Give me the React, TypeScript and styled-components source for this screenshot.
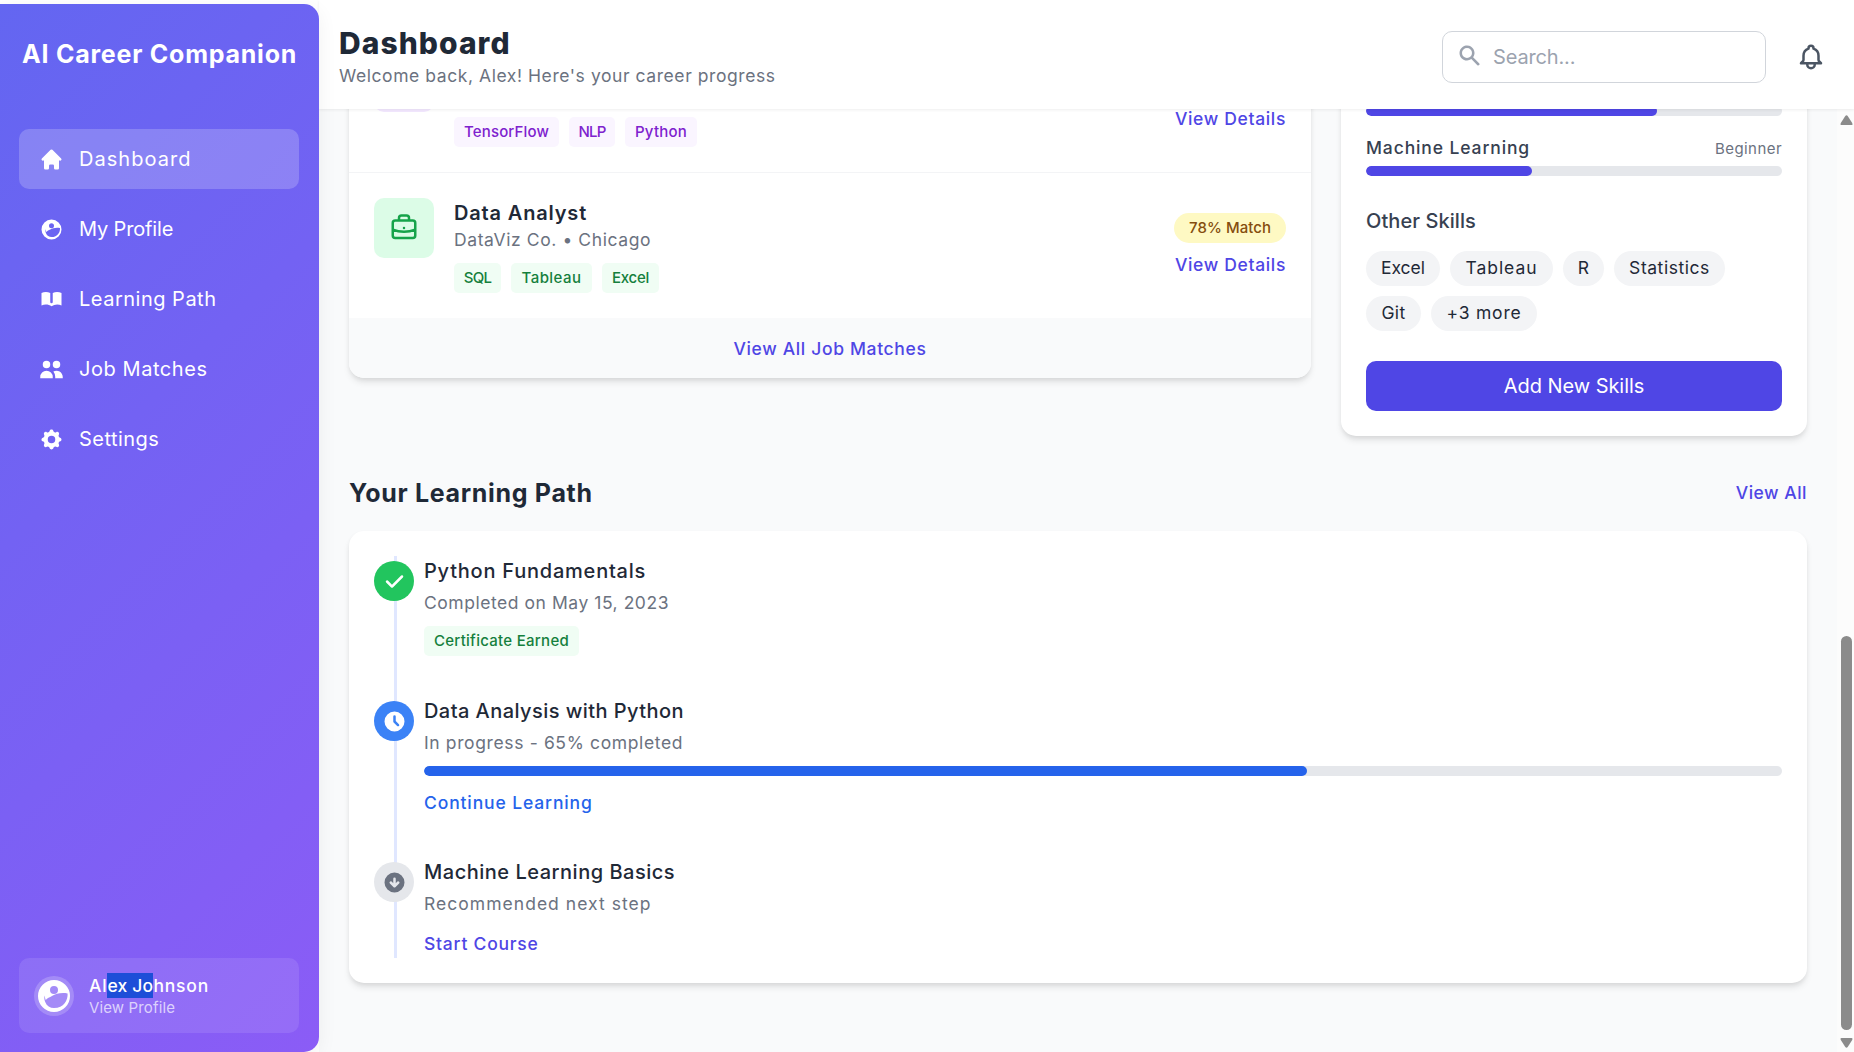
import React from 'react';
import styled, { createGlobalStyle, css } from 'styled-components';
import {
  HiHome,
  HiBookOpen,
  HiUsers,
  HiCog,
  HiSearch,
  HiCheck,
  HiClock,
  HiArrowCircleDown,
  HiOutlineBell,
  HiOutlineBriefcase,
} from 'react-icons/hi';

const GlobalStyle = createGlobalStyle`
  *, *::before, *::after { box-sizing: border-box; }
  body {
    margin: 0;
    overflow: hidden;
    background: #fff;
    color: #1f2937;
    font-family: Inter, "Liberation Sans", sans-serif;
  }
  h1, h2, h3, h4, p { margin: 0; }
  button, input { font: inherit; }
`;

type Spaced = { $ls?: number };
const spacing = css<Spaced>`
  letter-spacing: ${({ $ls = 0 }) => $ls}px;
  white-space: nowrap;
`;

const Shell = styled.div`
  display: flex;
  width: 1854px;
  height: 1052px;
`;

/* Sidebar */

const Sidebar = styled.aside`
  display: flex;
  flex-direction: column;
  flex: none;
  width: 319px;
  height: 1048px;
  margin-top: 4px;
  padding: 23px 20px 19px 19px;
  border-radius: 0 15px 15px 0;
  background: linear-gradient(135deg, #6366f1, #8b5cf6);
  box-shadow: 0 5px 20px rgba(0, 0, 0, 0.06);
  color: #fff;
  position: relative;
  z-index: 3;
`;

const Brand = styled.h1<Spaced>`
  padding-left: 3px;
  font-size: 25px;
  font-weight: 700;
  line-height: 54px;
  ${spacing}
`;

const Nav = styled.nav`
  display: flex;
  flex-direction: column;
  gap: 10px;
  margin-top: 48px;
`;

const NavItem = styled.a<Spaced & { $active?: boolean }>`
  display: flex;
  align-items: center;
  gap: 15px;
  height: 60px;
  padding-left: 20px;
  border-radius: 10px;
  background: ${({ $active }) => ($active ? 'rgba(255,255,255,.2)' : 'transparent')};
  font-size: 20px;
  ${spacing}
  svg { width: 25px; height: 25px; }
`;

const UserCard = styled.div`
  display: flex;
  align-items: center;
  gap: 15px;
  height: 75px;
  margin-top: auto;
  padding-left: 15px;
  border-radius: 10px;
  background: rgba(255, 255, 255, 0.1);
`;

const Avatar = styled.div`
  width: 40px;
  height: 40px;
  border-radius: 50%;
  background: rgba(255, 255, 255, 0.2);
  svg { display: block; width: 40px; height: 40px; }
`;

const UserName = styled.p<Spaced>`
  font-size: 17.5px;
  font-weight: 500;
  line-height: 25px;
  ${spacing}
`;

const Selected = styled.span`
  display: inline-block;
  height: 25px;
  vertical-align: top;
  background: #1d4ed8;
  letter-spacing: 0.2px;
`;

const UserLink = styled.p<Spaced>`
  color: rgba(255, 255, 255, 0.7);
  font-size: 15px;
  line-height: 20px;
  ${spacing}
`;

/* Header */

const Main = styled.div`
  display: flex;
  flex-direction: column;
  flex: 1;
  min-width: 0;
`;

const Header = styled.header`
  display: flex;
  align-items: center;
  justify-content: space-between;
  flex: none;
  height: 109px;
  padding: 5px 28px 0 20px;
  background: #fff;
  box-shadow: 0 1px 3px rgba(0, 0, 0, 0.07);
  position: relative;
  z-index: 2;
`;

const Heading = styled.div`
  margin-top: -1px;
`;

const PageTitle = styled.h2<Spaced>`
  font-size: 30px;
  font-weight: 800;
  line-height: 38px;
  ${spacing}
`;

const PageSubtitle = styled.p<Spaced>`
  color: #6b7280;
  font-size: 17.5px;
  line-height: 27px;
  ${spacing}
`;

const HeaderTools = styled.div`
  display: flex;
  align-items: center;
  gap: 30px;
  > svg { width: 30px; height: 30px; color: #4b5563; }
`;

const SearchBox = styled.label`
  display: flex;
  align-items: center;
  gap: 11px;
  width: 324px;
  height: 52px;
  padding: 0 14px;
  border: 1px solid #d1d5db;
  border-radius: 10px;
  color: #9ca3af;
  svg { width: 25px; height: 25px; margin-top: -3px; flex: none; }
`;

const SearchInput = styled.input`
  width: 240px;
  padding: 0;
  border: 0;
  outline: 0;
  background: none;
  font-size: 20px;
  letter-spacing: -0.15px;
  &::placeholder { color: #9ca3af; opacity: 1; }
`;

/* Scroll region */

const Scroller = styled.div`
  display: flex;
  flex: 1;
  min-height: 0;
  background: #f9fafb;
`;

const Content = styled.main`
  display: flex;
  flex-direction: column;
  justify-content: flex-end;
  flex: 1;
  min-width: 0;
  overflow: hidden;
  padding: 0 30px 69px;
  > * { flex-shrink: 0; }
`;

const ScrollBar = styled.div`
  display: flex;
  flex-direction: column;
  align-items: center;
  flex: none;
  width: 17px;
  padding: 6px 0 4px 1px;
  background: #fcfcfc;
  svg { width: 13px; height: 10px; fill: #8b8b8b; flex: none; }
`;

const Thumb = styled.div`
  width: 11px;
  height: 394px;
  margin: auto 0 8px;
  border-radius: 6px;
  background: #8b8b8b;
`;

const Columns = styled.div`
  display: grid;
  grid-template-columns: 962px 466px;
  gap: 30px;
  align-items: start;
  height: 409px;
`;

const Card = styled.section`
  border-radius: 15px;
  background: #fff;
  box-shadow: 0 5px 7px -1px rgba(0, 0, 0, 0.1), 0 2px 5px -1px rgba(0, 0, 0, 0.07);
`;

/* Job matches */

const JobsCard = styled(Card)`
  margin-top: -1px;
`;

const JobRow = styled.article`
  display: flex;
  gap: 20px;
  height: 146px;
  padding: 25px;
  border-top: 1px solid #f3f4f6;
`;

const JobIcon = styled.div<{ $bg: string; $fg: string }>`
  display: grid;
  place-items: center;
  width: 60px;
  height: 60px;
  border-radius: 10px;
  background: ${({ $bg }) => $bg};
  color: ${({ $fg }) => $fg};
  svg { width: 30px; height: 30px; }
`;

const JobBody = styled.div`
  display: flex;
  flex-direction: column;
  justify-content: flex-end;
  height: 95px;
`;

const JobTitle = styled.h3<Spaced>`
  font-size: 20px;
  font-weight: 600;
  line-height: 30px;
  ${spacing}
`;

const Muted = styled.p<Spaced>`
  padding-bottom: 2px;
  color: #6b7280;
  font-size: 17.5px;
  line-height: 23px;
  ${spacing}
`;

const Tags = styled.div`
  display: flex;
  gap: 10px;
  margin-top: 10px;
`;

const Tag = styled.span<Spaced & { $tone: 'green' | 'purple'; $w: number }>`
  width: ${({ $w }) => $w}px;
  height: 30px;
  border-radius: 5px;
  background: ${({ $tone }) => ($tone === 'green' ? '#f0fdf4' : '#faf5ff')};
  color: ${({ $tone }) => ($tone === 'green' ? '#15803d' : '#7e22ce')};
  font-size: 15px;
  font-weight: 500;
  line-height: 30px;
  text-align: center;
  ${spacing}
`;

const JobAside = styled.div`
  display: flex;
  flex-direction: column;
  justify-content: flex-end;
  align-items: flex-end;
  gap: 10px;
  height: 80px;
  margin-left: auto;
`;

const MatchPill = styled.span<Spaced>`
  width: 112px;
  height: 30px;
  border-radius: 15px;
  background: #fef9c3;
  color: #854d0e;
  font-size: 15px;
  font-weight: 500;
  line-height: 30px;
  text-align: center;
  ${spacing}
`;

const TextLink = styled.a<Spaced & { $blue?: boolean }>`
  display: block;
  padding-bottom: 2px;
  color: ${({ $blue }) => ($blue ? '#2563eb' : '#4f46e5')};
  font-size: 17.5px;
  font-weight: 500;
  line-height: 23px;
  ${spacing}
`;

const CardFooter = styled.footer`
  display: grid;
  place-items: center;
  height: 60px;
  padding-top: 3px;
  border-radius: 0 0 15px 15px;
  background: #f9fafb;
`;

/* Skills */

const SkillsCard = styled(Card)`
  height: 409px;
  padding: 79px 25px 25px;
`;

const Track = styled.div<{ $gap?: number }>`
  height: 10px;
  margin-top: ${({ $gap = 0 }) => $gap}px;
  border-radius: 5px;
  background: #e5e7eb;
  overflow: hidden;
`;

const Fill = styled.div<{ $color: string }>`
  height: 100%;
  border-radius: 5px;
  background: ${({ $color }) => $color};
`;

const SkillHead = styled.div`
  display: flex;
  justify-content: space-between;
  align-items: center;
  height: 24px;
  margin-top: 19px;
`;

const SkillName = styled.span<Spaced>`
  color: #374151;
  font-size: 17.5px;
  font-weight: 500;
  ${spacing}
`;

const SkillLevel = styled.span<Spaced>`
  padding-top: 2px;
  color: #6b7280;
  font-size: 15px;
  ${spacing}
`;

const SubTitle = styled.h4<Spaced>`
  margin-top: 30px;
  color: #374151;
  font-size: 20px;
  font-weight: 500;
  line-height: 30px;
  ${spacing}
`;

const Chips = styled.div`
  display: flex;
  flex-wrap: wrap;
  gap: 10px;
  margin-top: 15px;
`;

const Chip = styled.span<Spaced & { $w: number }>`
  width: ${({ $w }) => $w}px;
  height: 35px;
  border-radius: 18px;
  background: #f3f4f6;
  font-size: 17.5px;
  line-height: 34px;
  text-align: center;
  ${spacing}
`;

const PrimaryButton = styled.button`
  display: block;
  width: 100%;
  height: 50px;
  margin-top: 30px;
  padding: 0;
  border: 0;
  border-radius: 10px;
  background: #4f46e5;
  color: #fff;
  font-size: 20px;
  letter-spacing: -0.05px;
`;

/* Learning path */

const SectionHead = styled.div`
  display: flex;
  justify-content: space-between;
  align-items: center;
  height: 38px;
  margin: 38px 0 19px;
`;

const SectionTitle = styled.h3<Spaced>`
  font-size: 25px;
  font-weight: 700;
  ${spacing}
`;

const PathCard = styled(Card)`
  height: 452px;
  padding: 25px;
`;

const Timeline = styled.div`
  display: flex;
  flex-direction: column;
  height: 402px;
  position: relative;
  &::before {
    content: '';
    position: absolute;
    top: 0;
    bottom: 0;
    left: 20px;
    width: 3px;
    background: #e0e7ff;
  }
`;

const Step = styled.div<{ $h: number }>`
  display: flex;
  gap: 10px;
  height: ${({ $h }) => $h}px;
  position: relative;
`;

const Dot = styled.div<{ $bg: string; $fg: string }>`
  display: grid;
  place-items: center;
  flex: none;
  width: 40px;
  height: 40px;
  margin-top: 5px;
  border-radius: 50%;
  background: ${({ $bg }) => $bg};
  color: ${({ $fg }) => $fg};
  svg { width: 25px; height: 25px; }
`;

const StepBody = styled.div`
  flex: 1;
`;

const StepTitle = styled.h4<Spaced>`
  margin-bottom: 5px;
  font-size: 20px;
  font-weight: 500;
  line-height: 30px;
  ${spacing}
`;

const StepAction = styled.div`
  margin-top: 15px;
`;

const PersonIcon = () => (
  <svg viewBox="0 0 20 20" fill="currentColor">
    <path
      fillRule="evenodd"
      d="M18 10a8 8 0 11-16 0 8 8 0 0116 0zm-6-3a2 2 0 11-4 0 2 2 0 014 0zM5.6 13C5.1 12 5.1 10.8 5.3 9.8C5.6 10.8 5.5 11.5 5.9 12C6.6 11 7.8 10.7 9 10C11 8.8 13.4 8.2 16.8 8.7C17 12 15 16 10 16C8 16 6.4 15 5.6 13z"
    />
  </svg>
);

export default function App() {
  return (
    <>
      <GlobalStyle />
      <Shell>
        <Sidebar>
          <Brand $ls={0.77}>AI Career Companion</Brand>
          <Nav>
            <NavItem $active $ls={1.03}><HiHome />Dashboard</NavItem>
            <NavItem $ls={-0.15}><PersonIcon />My Profile</NavItem>
            <NavItem $ls={0.5}><HiBookOpen />Learning Path</NavItem>
            <NavItem $ls={0.56}><HiUsers />Job Matches</NavItem>
            <NavItem $ls={0.45}><HiCog />Settings</NavItem>
          </Nav>
          <UserCard>
            <Avatar><PersonIcon /></Avatar>
            <div>
              <UserName $ls={0.8}>Al<Selected>ex Jo</Selected>hnson</UserName>
              <UserLink $ls={0.13}>View Profile</UserLink>
            </div>
          </UserCard>
        </Sidebar>

        <Main>
          <Header>
            <Heading>
              <PageTitle $ls={1.05}>Dashboard</PageTitle>
              <PageSubtitle $ls={0.57}>Welcome back, Alex! Here's your career progress</PageSubtitle>
            </Heading>
            <HeaderTools>
              <SearchBox>
                <HiSearch />
                <SearchInput placeholder="Search..." />
              </SearchBox>
              <HiOutlineBell />
            </HeaderTools>
          </Header>

          <Scroller>
            <Content>
              <Columns>
                <JobsCard>
                  <JobRow>
                    <JobIcon $bg="#f3e8ff" $fg="#9333ea" />
                    <JobBody>
                      <Tags>
                        <Tag $tone="purple" $w={105} $ls={0.15}>TensorFlow</Tag>
                        <Tag $tone="purple" $w={46} $ls={-0.9}>NLP</Tag>
                        <Tag $tone="purple" $w={72} $ls={0.2}>Python</Tag>
                      </Tags>
                    </JobBody>
                    <JobAside>
                      <TextLink $ls={0.66}>View Details</TextLink>
                    </JobAside>
                  </JobRow>
                  <JobRow>
                    <JobIcon $bg="#dcfce7" $fg="#16a34a"><HiOutlineBriefcase /></JobIcon>
                    <JobBody>
                      <JobTitle $ls={0.83}>Data Analyst</JobTitle>
                      <Muted $ls={0.59}>DataViz Co. • Chicago</Muted>
                      <Tags>
                        <Tag $tone="green" $w={47} $ls={-0.8}>SQL</Tag>
                        <Tag $tone="green" $w={81} $ls={0.46}>Tableau</Tag>
                        <Tag $tone="green" $w={57} $ls={-0.25}>Excel</Tag>
                      </Tags>
                    </JobBody>
                    <JobAside>
                      <MatchPill $ls={0.05}>78% Match</MatchPill>
                      <TextLink $ls={0.66}>View Details</TextLink>
                    </JobAside>
                  </JobRow>
                  <CardFooter>
                    <TextLink $ls={0.65}>View All Job Matches</TextLink>
                  </CardFooter>
                </JobsCard>

                <SkillsCard>
                  <Track><Fill $color="#4f46e5" style={{ width: '70%' }} /></Track>
                  <SkillHead>
                    <SkillName $ls={0.88}>Machine Learning</SkillName>
                    <SkillLevel $ls={0.44}>Beginner</SkillLevel>
                  </SkillHead>
                  <Track $gap={7}><Fill $color="#4f46e5" style={{ width: '40%' }} /></Track>
                  <SubTitle $ls={0.08}>Other Skills</SubTitle>
                  <Chips>
                    <Chip $w={74}>Excel</Chip>
                    <Chip $w={103} $ls={0.95}>Tableau</Chip>
                    <Chip $w={41}>R</Chip>
                    <Chip $w={111} $ls={0.55}>Statistics</Chip>
                    <Chip $w={55} $ls={0.4}>Git</Chip>
                    <Chip $w={106} $ls={0.8}>+3 more</Chip>
                  </Chips>
                  <PrimaryButton>Add New Skills</PrimaryButton>
                </SkillsCard>
              </Columns>

              <SectionHead>
                <SectionTitle $ls={0.68}>Your Learning Path</SectionTitle>
                <TextLink $ls={0.5}>View All</TextLink>
              </SectionHead>

              <PathCard>
                <Timeline>
                  <Step $h={140}>
                    <Dot $bg="#22c55e" $fg="#fff"><HiCheck /></Dot>
                    <StepBody>
                      <StepTitle $ls={0.77}>Python Fundamentals</StepTitle>
                      <Muted $ls={0.54}>Completed on May 15, 2023</Muted>
                      <Tags><Tag $tone="green" $w={155} $ls={0.28}>Certificate Earned</Tag></Tags>
                    </StepBody>
                  </Step>
                  <Step $h={161}>
                    <Dot $bg="#3b82f6" $fg="#fff"><HiClock /></Dot>
                    <StepBody>
                      <StepTitle $ls={0.44}>Data Analysis with Python</StepTitle>
                      <Muted $ls={0.63}>In progress - 65% completed</Muted>
                      <Track $gap={10}><Fill $color="#2563eb" style={{ width: '65%' }} /></Track>
                      <StepAction><TextLink $blue $ls={0.87}>Continue Learning</TextLink></StepAction>
                    </StepBody>
                  </Step>
                  <Step $h={101}>
                    <Dot $bg="#e5e7eb" $fg="#6b7280"><HiArrowCircleDown /></Dot>
                    <StepBody>
                      <StepTitle $ls={0.51}>Machine Learning Basics</StepTitle>
                      <Muted $ls={1.03}>Recommended next step</Muted>
                      <StepAction><TextLink $ls={0.76}>Start Course</TextLink></StepAction>
                    </StepBody>
                  </Step>
                </Timeline>
              </PathCard>
            </Content>
            <ScrollBar>
              <svg viewBox="0 0 13 10"><path d="M5.3 1Q6.5-.6 7.7 1L12.2 8Q13 10 11.5 10H1.5Q0 10 .8 8z" /></svg>
              <Thumb />
              <svg viewBox="0 0 13 10"><path d="M5.3 9Q6.5 10.6 7.7 9L12.2 2Q13 0 11.5 0H1.5Q0 0 .8 2z" /></svg>
            </ScrollBar>
          </Scroller>
        </Main>
      </Shell>
    </>
  );
}
